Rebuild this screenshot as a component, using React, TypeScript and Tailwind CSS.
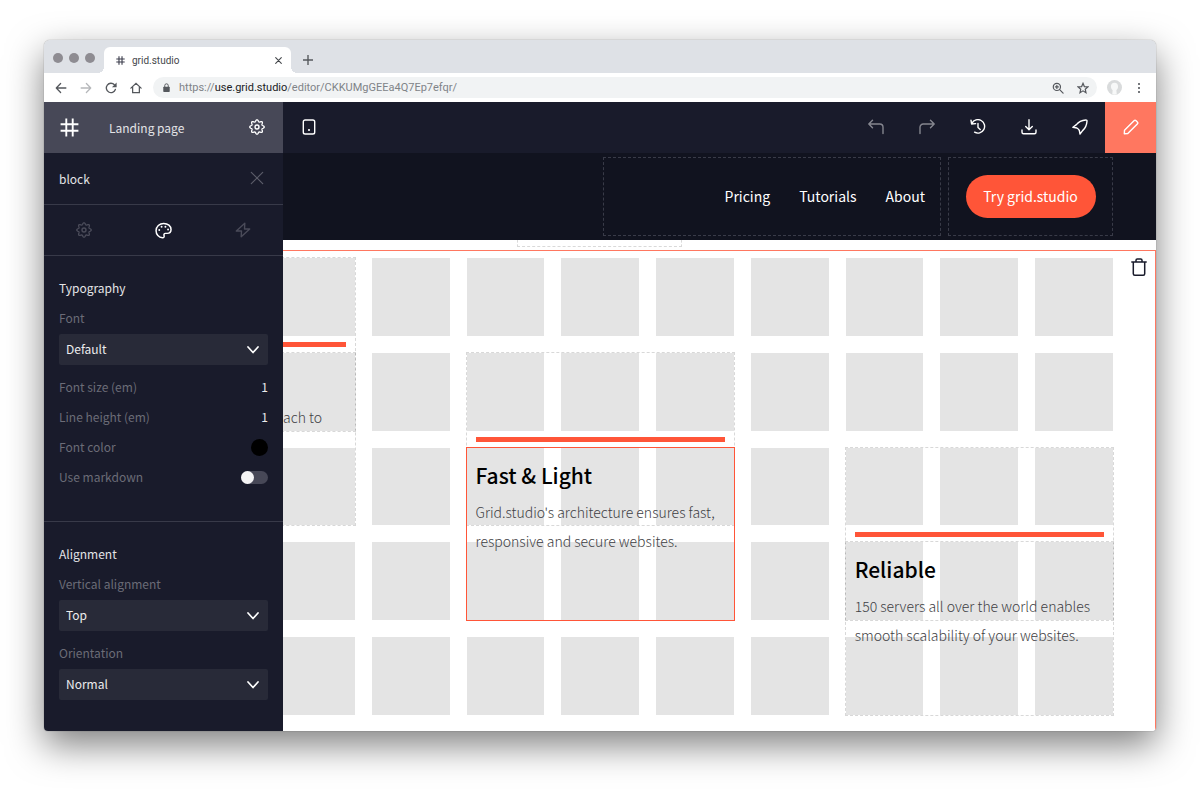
import React from 'react';

type IconProps = { className?: string; children: React.ReactNode };

const Icon: React.FC<IconProps> = ({ className = 'size-4', children }) => (
  <svg
    viewBox="0 0 16 16"
    className={className}
    fill="none"
    stroke="currentColor"
    strokeWidth="1.4"
    strokeLinecap="round"
    strokeLinejoin="round"
    aria-hidden="true"
  >
    {children}
  </svg>
);

// Wavy outline with eight soft teeth
const GEAR_POINTS = Array.from({ length: 96 }, (_, i) => {
  const angle = (i / 96) * Math.PI * 2;
  const radius = 6.3 + 0.95 * Math.cos(angle * 8);
  return `${(8 + radius * Math.cos(angle)).toFixed(2)},${(8 + radius * Math.sin(angle)).toFixed(2)}`;
}).join(' ');

const GearIcon = () => (
  <Icon>
    <polygon points={GEAR_POINTS} strokeWidth="1.3" />
    <circle cx="8" cy="8" r="2" />
  </Icon>
);

const HashIcon: React.FC<{ className?: string; width?: string }> = ({ className, width = '1.3' }) => (
  <Icon className={className}>
    <g strokeWidth={width} strokeLinecap="butt">
      <path d="M5.3.5v15M10.7.5v15M.5 5.3h15M.5 10.7h15" />
    </g>
  </Icon>
);

/* Browser chrome */
const TabBar = () => (
  <div className="flex h-[33px] items-end bg-[#dee1e6]">
    <div className="flex gap-[6px] self-center pt-[2px] pl-[9px]">
      <span className="size-[10px] rounded-full bg-[#8e8c92]" />
      <span className="size-[10px] rounded-full bg-[#8e8c92]" />
      <span className="size-[10px] rounded-full bg-[#8e8c92]" />
    </div>
    <div className="relative ml-[9px] flex h-[26px] w-[187px] items-center rounded-t-md bg-white px-2 before:absolute before:bottom-0 before:-left-[6px] before:size-[6px] before:bg-[radial-gradient(circle_at_0_0,transparent_6px,white_6px)] after:absolute after:-right-[6px] after:bottom-0 after:size-[6px] after:bg-[radial-gradient(circle_at_100%_0,transparent_6px,white_6px)]">
      <HashIcon className="ml-1 size-[9px] text-[#3c3d4c]" width="2" />
      <span className="ml-[7px] flex-1 font-[Roboto,sans-serif] text-[10px] text-[#45484c]">grid.studio</span>
      <button aria-label="Close tab" className="text-[#45484c]">
        <Icon className="size-[9px]">
          <path strokeWidth="2" d="M3 3l10 10M13 3l-10 10" />
        </Icon>
      </button>
    </div>
    <button aria-label="New tab" className="mb-2 ml-3 text-[#55585d]">
      <Icon className="size-[10px]">
        <path strokeWidth="2.2" strokeLinecap="butt" d="M8 0v16M0 8h16" />
      </Icon>
    </button>
  </div>
);

const AddressBar = () => (
  <div className="flex h-[29px] items-center bg-white pr-3 pl-[11px] text-[#55585d]">
    <div className="flex gap-[13px]">
      <button aria-label="Back">
        <Icon className="size-3">
          <path strokeWidth="1.7" d="M14.500 8H2M7.500 2L1.700 8l5.800 6" />
        </Icon>
      </button>
      <button aria-label="Forward" className="text-[#b6b8bb]">
        <Icon className="size-3">
          <path strokeWidth="1.7" d="M1.500 8H14M8.500 2l5.800 6-5.800 6" />
        </Icon>
      </button>
      <button aria-label="Reload">
        <Icon className="size-3">
          <path strokeWidth="1.8" d="M13.800 10a6.200 6.200 0 1 1-1.300-6.300L14 5.200" />
          <path fill="currentColor" stroke="none" d="M15.500 0.800v6.200h-6.200z" />
        </Icon>
      </button>
      <button aria-label="Home">
        <Icon className="size-3">
          <path strokeWidth="1.7" strokeLinejoin="miter" d="M1.200 8.200L8 1.800l6.800 6.400M3.500 7v7.300h9V7" />
        </Icon>
      </button>
    </div>
    <div className="ml-[11px] flex h-[21px] flex-1 items-center rounded-full bg-[#f1f3f4] pr-2 pl-[10px]">
      <svg viewBox="0 0 8 10" className="h-[9px] w-[7px]" aria-hidden="true">
        <path d="M2 4.500V2.800a2 2 0 0 1 4 0v1.700" fill="none" stroke="currentColor" strokeWidth="1.1" />
        <rect x="0.300" y="4" width="7.400" height="6" rx="0.800" fill="currentColor" />
      </svg>
      <p className="ml-[9px] flex-1 pt-[2px] font-[Roboto,sans-serif] text-[11px] text-[#808388]">
        https://<span className="text-[#202124]">use.grid.studio</span>/editor/CKKUMgGEEa4Q7Ep7efqr/
      </p>
      <button aria-label="Zoom">
        <Icon className="size-3">
          <g strokeWidth="1.600">
            <circle cx="6.500" cy="6.500" r="4.800" />
            <path d="M10.200 10.200l4.600 4.600M6.500 4.500v4M4.500 6.500h4" />
          </g>
        </Icon>
      </button>
      <button aria-label="Bookmark" className="ml-[13px]">
        <Icon className="size-3">
          <path
            strokeWidth="1.600"
            strokeLinejoin="miter"
            d="M8 1.800l1.800 4.300 4.700.4-3.500 3.100 1 4.600L8 11.800l-4 2.400 1-4.600-3.500-3.100 4.700-.4z"
          />
        </Icon>
      </button>
    </div>
    <button aria-label="Profile" className="ml-[10px]">
      <svg viewBox="0 0 16 16" className="size-[15px]" aria-hidden="true">
        <circle cx="8" cy="8" r="8" fill="#d9dbdc" />
        <path
          d="M8 3c2.500 0 3.800 1.700 3.800 4 0 1.800-.9 3.200-1.800 4l.4 4.300a8 8 0 0 1-4.800 0L6 11C5.100 10.200 4.200 8.800 4.200 7c0-2.300 1.300-4 3.800-4z"
          fill="#f7f8f8"
        />
      </svg>
    </button>
    <button aria-label="Menu" className="ml-3">
      <svg viewBox="0 0 10 12" className="h-3 w-[10px]" fill="currentColor" aria-hidden="true">
        <circle cx="5" cy="2" r="1.100" />
        <circle cx="5" cy="6" r="1.100" />
        <circle cx="5" cy="10" r="1.100" />
      </svg>
    </button>
  </div>
);

/* Sidebar */
const SelectField: React.FC<{ id: string; label: string; value: string }> = ({ id, label, value }) => (
  <div className="pb-[2px]">
    <label htmlFor={id} className="block text-[#6b6c77]">
      {label}
    </label>
    <div className="relative mt-[6px]">
      <select
        id={id}
        defaultValue={value}
        className="h-[31px] w-full appearance-none rounded-xs bg-[#282a38] px-[7px] pb-[2px] text-[#ececee]"
      >
        <option>{value}</option>
      </select>
      <svg
        viewBox="0 0 12 8"
        className="pointer-events-none absolute top-3 right-[9px] h-2 w-3"
        fill="none"
        aria-hidden="true"
      >
        <path d="M1 1l5 5.500L11 1" stroke="white" strokeWidth="1.700" strokeLinecap="round" strokeLinejoin="round" />
      </svg>
    </div>
  </div>
);

const NumberField: React.FC<{ id: string; label: string }> = ({ id, label }) => (
  <div className="flex justify-between">
    <label htmlFor={id} className="text-[#6b6c77]">
      {label}
    </label>
    <input id={id} defaultValue="1" className="h-5 w-10 text-right text-[#ececee]" />
  </div>
);

const Sidebar = () => (
  <aside className="w-[239px] shrink-0 bg-[#191b2b] text-[12px] leading-5 text-[#e4e4e7]">
    <div className="flex h-[51px] items-center bg-[#474857] pr-[18px] pl-4">
      <HashIcon className="size-[19px] text-white" width="1.600" />
      <span className="ml-[30px] flex-1">Landing page</span>
      <button aria-label="Page settings" className="pb-[2px] text-white">
        <GearIcon />
      </button>
    </div>
    <div className="flex h-[52px] items-center justify-between border-b border-[#383a49] pr-[19px] pl-[15px]">
      <span>block</span>
      <button aria-label="Close" className="pb-[2px] text-[#5b5c69]">
        <Icon className="size-[14px]">
          <path d="M1.500 1.500l13 13M14.500 1.500l-13 13" />
        </Icon>
      </button>
    </div>
    <div className="grid h-[51px] grid-cols-3 border-b border-[#383a49] text-[#4a4b59]">
      <button aria-label="Settings" className="grid place-items-center">
        <GearIcon />
      </button>
      <button aria-label="Style" className="grid place-items-center text-white">
        <Icon className="size-[17px]">
          <path d="M7 14.800C3.500 14.500 1 11.700 1 8.200 1 4.300 4.200 1.300 8.200 1.300c3.900 0 6.900 2.600 6.900 5.800 0 2.500-1.600 3.600-3.600 3.600H9.800c-1.200 0-1.700 1-1.300 1.900.5 1.200-.2 2.300-1.500 2.200z" />
          <g fill="currentColor" stroke="none">
            <circle cx="4" cy="7.500" r="0.900" />
            <circle cx="6.200" cy="4.500" r="0.900" />
            <circle cx="9.800" cy="4.400" r="0.900" />
            <circle cx="12.300" cy="7" r="0.900" />
          </g>
        </Icon>
      </button>
      <button aria-label="Interactions" className="grid place-items-center">
        <Icon>
          <path d="M9.800 1.200L1.300 9h5.200L6.200 14.800L14.700 7H9.500z" />
        </Icon>
      </button>
    </div>
    <section className="flex flex-col gap-[10px] border-b border-[#383a49] px-[15px] pt-[22px] pb-[34px]">
      <h2>Typography</h2>
      <SelectField id="font" label="Font" value="Default" />
      <NumberField id="font-size" label="Font size (em)" />
      <NumberField id="line-height" label="Line height (em)" />
      <div className="flex items-center justify-between">
        <label htmlFor="color" className="text-[#6b6c77]">
          Font color
        </label>
        <input
          id="color"
          type="color"
          defaultValue="#000000"
          className="size-[17px] appearance-none overflow-hidden rounded-full bg-black [&::-webkit-color-swatch]:border-0 [&::-webkit-color-swatch-wrapper]:p-0"
        />
      </div>
      <div className="flex items-center justify-between">
        <label htmlFor="markdown" className="text-[#6b6c77]">
          Use markdown
        </label>
        <input
          id="markdown"
          type="checkbox"
          className="h-[13px] w-[27px] appearance-none rounded-full bg-[#474857] before:block before:size-[13px] before:rounded-full before:bg-[#f4f4f5] checked:before:ml-[14px]"
        />
      </div>
    </section>
    <section className="flex flex-col gap-[10px] px-[15px] pt-[22px] pb-[29px]">
      <h2>Alignment</h2>
      <SelectField id="vertical" label="Vertical alignment" value="Top" />
      <SelectField id="orientation" label="Orientation" value="Normal" />
    </section>
  </aside>
);

/* Editor toolbar */
const ToolButton: React.FC<{ label: string; className?: string; children: React.ReactNode }> = ({
  label,
  className = 'text-white',
  children,
}) => (
  <button aria-label={label} className={`grid h-[51px] w-[51px] place-items-center pb-[2px] ${className}`}>
    <Icon>{children}</Icon>
  </button>
);

const Toolbar = () => (
  <div className="flex bg-[#191b2b]">
    <ToolButton label="Mobile preview">
      <rect x="2.300" y="1" width="11.400" height="14" rx="1.800" />
      <circle cx="8" cy="11" r="1.100" fill="currentColor" stroke="none" />
    </ToolButton>
    <div className="ml-auto flex">
      <ToolButton label="Undo" className="text-[#85868f]">
        <path d="M4.500 1.200L.8 5l3.700 3.800M.8 5h11a3.200 3.200 0 0 1 3.200 3.200v6.300" />
      </ToolButton>
      <ToolButton label="Redo" className="text-[#85868f]">
        <path d="M11.500 1.200L15.200 5l-3.700 3.800M15.200 5h-11A3.200 3.200 0 0 0 1 8.200v6.300" />
      </ToolButton>
      <ToolButton label="History">
        <path d="M2 4.200A6.700 6.700 0 1 1 4.600 13.200M1 1.200l.6 3.800 4-.4M8 4.500v4l2.200 2" />
      </ToolButton>
      <ToolButton label="Download">
        <path d="M8 .8v9.800M4.700 7.500L8 10.800l3.300-3.300M1 11v2.200c0 .9.600 1.500 1.500 1.500h11c.9 0 1.500-.6 1.500-1.500V11" />
      </ToolButton>
      <ToolButton label="Publish">
        <path d="M13.900 1C9.600 1.400 6.400 3 4.400 5.600L.9 8.300l4 .7c1.200.7 1.900 1.400 2.400 2.400l.7 3.600 2.600-3.400c2.600-2.200 4.100-5.200 4.400-9.500.1-.7-.4-1.100-1.100-1.100z" />
      </ToolButton>
      <ToolButton label="Edit" className="bg-[#ff7760] text-white">
        <path d="M1.500 11.300L11 1.800a1.500 1.500 0 0 1 2.100 0l1.200 1.200a1.500 1.500 0 0 1 0 2.100L4.800 14.600l-3.500.2z" />
      </ToolButton>
    </div>
  </div>
);

/* Page being edited */
const SiteHeader = () => (
  <header className="flex justify-end gap-[7px] bg-[#11131f] pt-1 pr-[43px] pb-1 text-[14px] text-white">
    <nav className="flex h-[79px] w-[338px] items-center justify-end gap-[29px] border border-dashed border-[#393b48] pr-[15px]">
      <a href="#pricing">Pricing</a>
      <a href="#tutorials">Tutorials</a>
      <a href="#about">About</a>
    </nav>
    <div className="grid h-[79px] w-[165px] place-items-center border border-dashed border-[#393b48]">
      <a href="#try" className="grid h-[43px] w-[130px] place-items-center rounded-full bg-[#ff5538]">
        Try grid.studio
      </a>
    </div>
  </header>
);

const ImageBlock: React.FC<{ className: string }> = ({ className }) => (
  <div className={`-m-px border border-dashed border-black/15 px-[9px] pt-[84px] ${className}`}>
    <div className="h-[5px] bg-[#ff5538]" />
  </div>
);

const TextBlock: React.FC<{ className: string; title: string; children: React.ReactNode }> = ({
  className,
  title,
  children,
}) => (
  <div className={`-m-px border px-[9px] pt-[11px] ${className}`}>
    <h3 className="text-[21px] leading-8 font-medium text-black">{title}</h3>
    <p className="mt-[7px] text-[14px] leading-[29px] font-light whitespace-nowrap text-[#3f3f45]">{children}</p>
  </div>
);

const Canvas = () => (
  <main className="flex flex-1 flex-col bg-white">
    <div className="ml-[234px] h-[7px] w-[165px] border border-t-0 border-dashed border-black/15" />
    <section className="relative mt-[3px] flex-1 border-t border-r border-[#ff7760] pt-[7px] pb-[15px]">
      <button aria-label="Delete section" className="absolute top-[7px] right-2 text-[#191b2b]">
        <svg
          viewBox="0 0 16 18"
          className="h-[18px] w-4"
          fill="none"
          stroke="currentColor"
          strokeWidth="1.500"
          strokeLinecap="round"
          aria-hidden="true"
        >
          <path d="M.8 4h14.400M5 3.800V2.300C5 1.500 5.600 1 6.300 1h3.400c.7 0 1.300.5 1.300 1.300v1.500M2.300 4.200v11.500c0 .9.600 1.500 1.500 1.500h8.400c.9 0 1.500-.6 1.500-1.500V4.200" />
        </svg>
      </button>
      <div className="mr-[42px] -ml-[6px] grid">
        <div className="col-start-1 row-start-1 grid grid-cols-9 gap-[17px]">
          {Array.from({ length: 45 }, (_, i) => (
            <div key={i} className="aspect-square bg-[#e4e4e4]" />
          ))}
        </div>
        <div className="col-start-1 row-start-1 grid grid-cols-9 grid-rows-5 gap-[17px]">
          <ImageBlock className="col-start-1 row-span-2 row-start-1 pl-0" />
          <div className="col-start-1 row-span-2 row-start-2 -m-px border border-dashed border-black/15 pt-[50px] pl-[6px] text-[14px] leading-[29px] font-light text-[#3f3f45]">
            ach to
          </div>
          <ImageBlock className="col-span-3 col-start-3 row-span-2 row-start-2" />
          <TextBlock className="col-span-3 col-start-3 row-span-2 row-start-3 border-[#ff5538]" title="Fast & Light">
            Grid.studio's architecture ensures fast,
            <br />
            responsive and secure websites.
          </TextBlock>
          <ImageBlock className="col-span-3 col-start-7 row-span-2 row-start-3" />
          <TextBlock
            className="col-span-3 col-start-7 row-span-2 row-start-4 border-dashed border-black/15"
            title="Reliable"
          >
            150 servers all over the world enables
            <br />
            smooth scalability of your websites.
          </TextBlock>
        </div>
      </div>
    </section>
  </main>
);

const App: React.FC = () => {
  return (
    <div className="min-h-screen bg-white px-11 pt-10 pb-16 font-['Noto_Sans_CJK_SC',sans-serif]">
      <div className="overflow-hidden rounded-t-md rounded-b-sm shadow-[0_0_1px_rgba(0,0,0,0.6),0_14px_36px_rgba(0,0,0,0.5)]">
        <TabBar />
        <AddressBar />
        <div className="flex">
          <Sidebar />
          <div className="flex min-w-0 flex-1 flex-col overflow-hidden">
            <Toolbar />
            <SiteHeader />
            <Canvas />
          </div>
        </div>
      </div>
    </div>
  );
};

export default App;
